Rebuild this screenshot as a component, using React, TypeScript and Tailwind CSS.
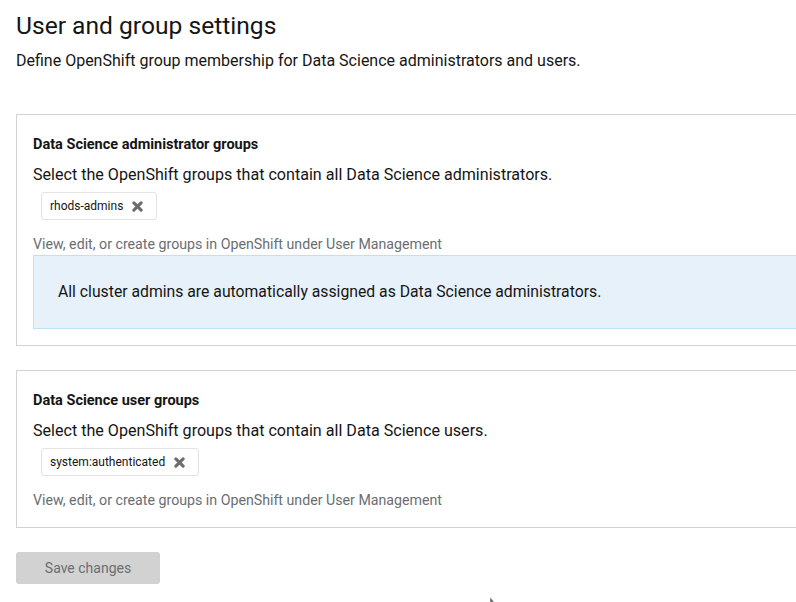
const TimesIcon = () => (
  <svg width="11" height="11" viewBox="0 0 10 10" aria-hidden>
    <path d="M1.7 1.7 L8.3 8.3 M8.3 1.7 L1.7 8.3" stroke="#6a6e73" strokeWidth="2.8" strokeLinecap="round" />
  </svg>
);

const Chip = ({ label }: { label: string }) => (
  <div className="ml-2 mt-[5px] inline-flex h-7 items-center self-start rounded-[3px] border border-[#e3e3e3] bg-white pl-2 pr-[13px] text-[12px] text-[#151515]">
    <span>{label}</span>
    <span className="ml-[9px] flex items-center">
      <TimesIcon />
    </span>
  </div>
);

const GroupCard = ({
  title,
  desc,
  chip,
  children,
}: {
  title: string;
  desc: string;
  chip: string;
  children?: React.ReactNode;
}) => (
  <section className="flex w-[900px] flex-col border border-[#d2d2d2] pt-[19px] pl-4 pr-16 pb-4">
    <h2 className="text-[14.5px] font-bold leading-[21px] text-[#151515]">{title}</h2>
    <p className="mt-2 text-[16.1px] leading-6 text-[#151515]">{desc}</p>
    <Chip label={chip} />
    <p className="mt-[14px] text-[14.2px] leading-[21px] text-[#6a6e73]">
      View, edit, or create groups in OpenShift under User Management
    </p>
    {children}
  </section>
);

export default function App() {
  return (
    <div
      className="relative h-[602px] w-[796px] overflow-hidden bg-white pl-4 pt-[10px]"
      style={{ fontFamily: "Roboto, 'Liberation Sans', sans-serif" }}
    >
      <h1 className="text-[24.6px] font-normal leading-[32px] text-[#151515]">User and group settings</h1>
      <p className="mt-[7px] text-[16px] leading-6 text-[#151515]">
        Define OpenShift group membership for Data Science administrators and users.
      </p>

      <div className="mt-[41px] flex flex-col gap-6">
        <GroupCard
          title="Data Science administrator groups"
          desc="Select the OpenShift groups that contain all Data Science administrators."
          chip="rhods-admins"
        >
          <div className="border border-[#bee1f4] bg-[#e7f1fa] py-6 pl-6">
            <p className="text-[15.75px] leading-6 text-[#151515]">
              All cluster admins are automatically assigned as Data Science administrators.
            </p>
          </div>
        </GroupCard>

        <GroupCard
          title="Data Science user groups"
          desc="Select the OpenShift groups that contain all Data Science users."
          chip="system:authenticated"
        />
      </div>

      <button
        type="button"
        disabled
        className="mt-6 flex h-8 w-[144px] items-center justify-center rounded-[3px] bg-[#d2d2d2] text-[14px] text-[#6a6e73]"
      >
        Save changes
      </button>

      <svg className="absolute left-[489px] top-[597px]" width="8" height="6" viewBox="0 0 8 6" aria-hidden>
        <path d="M1 0 L1 6 L3 5 L6 6 Z" fill="#555" stroke="#fff" strokeWidth="0.6" />
      </svg>
    </div>
  );
}
